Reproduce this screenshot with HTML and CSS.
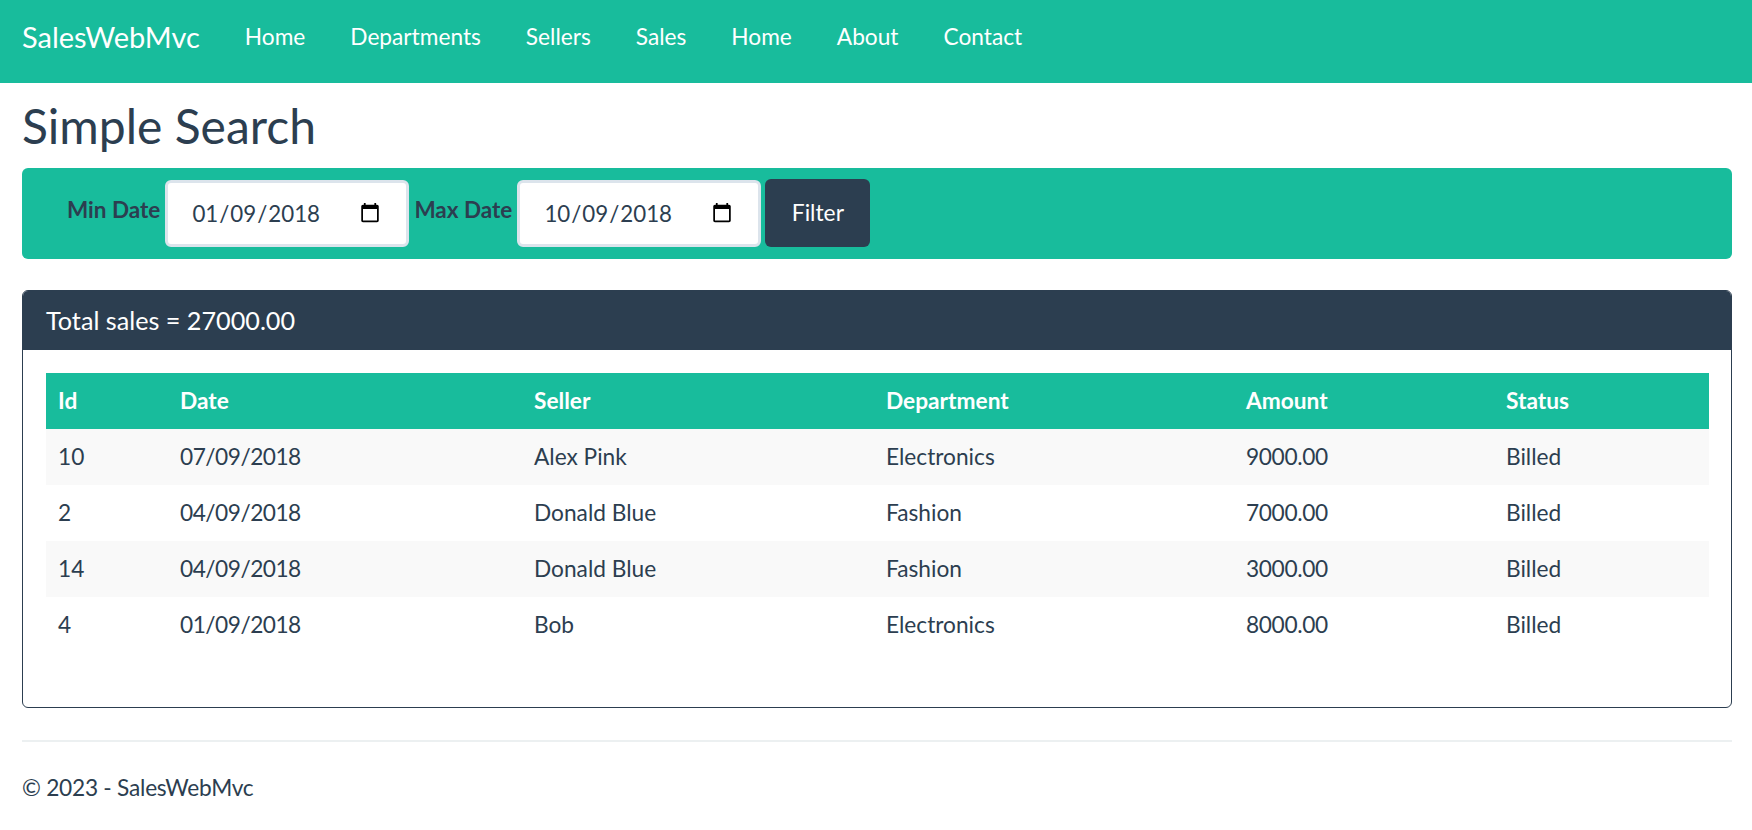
FILE: index.html
```html
<!DOCTYPE html>
<html lang="en">
<head>
    <meta charset="UTF-8">
    <meta name="viewport" content="width=device-width, initial-scale=1.0">
    <title>Simple Search - SalesWebMvc</title>
    <link rel="stylesheet" href="styles.css">
</head>
<body>

    <nav class="navbar">
        <a class="brand" href="#">SalesWebMvc</a>
        <ul class="nav-links">
            <li><a href="#">Home</a></li>
            <li><a href="#">Departments</a></li>
            <li><a href="#">Sellers</a></li>
            <li><a href="#">Sales</a></li>
            <li><a href="#">Home</a></li>
            <li><a href="#">About</a></li>
            <li><a href="#">Contact</a></li>
        </ul>
    </nav>

    <main class="container">
        <h2 class="page-title">Simple Search</h2>

        <form class="filter-bar">
            <label for="minDate">Min Date</label>
            <input type="date" id="minDate" name="minDate" value="2018-01-09">
            <label for="maxDate">Max Date</label>
            <input type="date" id="maxDate" name="maxDate" value="2018-10-09">
            <button type="submit">Filter</button>
        </form>

        <section class="card">
            <h3 class="card-header">Total sales = 27000.00</h3>
            <div class="card-body">
                <table class="sales-table">
                    <colgroup>
                        <col class="col-id">
                        <col class="col-date">
                        <col class="col-seller">
                        <col class="col-department">
                        <col class="col-amount">
                        <col class="col-status">
                    </colgroup>
                    <thead>
                        <tr>
                            <th>Id</th>
                            <th>Date</th>
                            <th>Seller</th>
                            <th>Department</th>
                            <th>Amount</th>
                            <th>Status</th>
                        </tr>
                    </thead>
                    <tbody>
                        <tr>
                            <td>10</td>
                            <td class="date">07/09/2018</td>
                            <td>Alex Pink</td>
                            <td>Electronics</td>
                            <td class="amount">9000.00</td>
                            <td>Billed</td>
                        </tr>
                        <tr>
                            <td>2</td>
                            <td class="date">04/09/2018</td>
                            <td>Donald Blue</td>
                            <td>Fashion</td>
                            <td class="amount">7000.00</td>
                            <td>Billed</td>
                        </tr>
                        <tr>
                            <td>14</td>
                            <td class="date">04/09/2018</td>
                            <td>Donald Blue</td>
                            <td>Fashion</td>
                            <td class="amount">3000.00</td>
                            <td>Billed</td>
                        </tr>
                        <tr>
                            <td>4</td>
                            <td class="date">01/09/2018</td>
                            <td>Bob</td>
                            <td>Electronics</td>
                            <td class="amount">8000.00</td>
                            <td>Billed</td>
                        </tr>
                    </tbody>
                </table>
            </div>
        </section>

        <hr class="divider">

        <footer class="footer">&copy; 2023 - SalesWebMvc</footer>
    </main>

</body>
</html>
```

FILE: styles.css
```css
* {
    box-sizing: border-box;
}
body {
    font-family: Lato, "Noto Sans", sans-serif;
    font-size: 22.7px;
    line-height: 32px;
    color: #2c3e50;
    margin: 0;
}
.navbar {
    display: flex;
    align-items: center;
    height: 83px;
    padding: 0 22px 10px;
    background-color: #18bc9c;
}
.navbar a {
    color: white;
    text-decoration: none;
}
.brand {
    font-size: 29px;
    margin-right: 45px;
}
.nav-links {
    display: flex;
    gap: 45px;
    list-style: none;
    margin: 0;
    padding: 0;
}
.container {
    padding: 0 20px 0 22px;
}
.page-title {
    font-size: 48px;
    font-weight: 400;
    line-height: 58px;
    margin: 0;
    padding: 14px 0 13px;
}
.filter-bar {
    display: flex;
    align-items: center;
    height: 91px;
    padding: 0 0 0 45px;
    background-color: #18bc9c;
    border-radius: 6px;
}
.filter-bar label {
    font-size: 22.5px;
    font-weight: 700;
    margin-right: 5px;
    margin-top: -7px;
}
.filter-bar input {
    width: 244px;
    height: 67px;
    padding: 0 23px 0 23px;
    margin-right: 5px;
    border: 3px solid #dce4ec;
    border-radius: 6px;
    background-color: white;
    color: #2c3e50;
    font-family: inherit;
    font-size: 22.3px;
}
.filter-bar button {
    width: 105px;
    height: 68px;
    margin: -2px 0 0 -1px;
    padding: 0 0 2px;
    border: none;
    border-radius: 6px;
    background-color: #2c3e50;
    color: white;
    font-family: inherit;
    font-size: 22.8px;
    cursor: pointer;
}
.card {
    margin-top: 31px;
    height: 418px;
    border: 1px solid #2c3e50;
    border-radius: 6px;
    overflow: hidden;
}
.card-header {
    font-size: 25.2px;
    font-weight: 400;
    line-height: 59px;
    height: 59px;
    margin: 0;
    padding: 0 23px;
    background-color: #2c3e50;
    color: white;
}
.card-body {
    padding: 23px 23px 0;
}
.sales-table {
    width: 1663px;
    table-layout: fixed;
    border-collapse: collapse;
}
.col-id { width: 122px; }
.col-date { width: 354px; }
.col-seller { width: 352px; }
.col-department { width: 360px; }
.col-amount { width: 260px; }
.col-status { width: 215px; }
.sales-table th, .sales-table td {
    height: 56px;
    padding: 0 12px 1px;
    text-align: left;
}
.sales-table th {
    background-color: #18bc9c;
    color: white;
    font-weight: 700;
}
.sales-table tbody tr:nth-child(odd) {
    background-color: #f9f9f9;
}
.sales-table .date {
    letter-spacing: -0.5px;
}
.sales-table .amount {
    letter-spacing: -0.35px;
}
.divider {
    border: none;
    border-top: 2px solid #ecf0f1;
    margin: 32px 0 0;
}
.footer {
    padding-top: 30px;
    letter-spacing: -0.25px;
}
```
